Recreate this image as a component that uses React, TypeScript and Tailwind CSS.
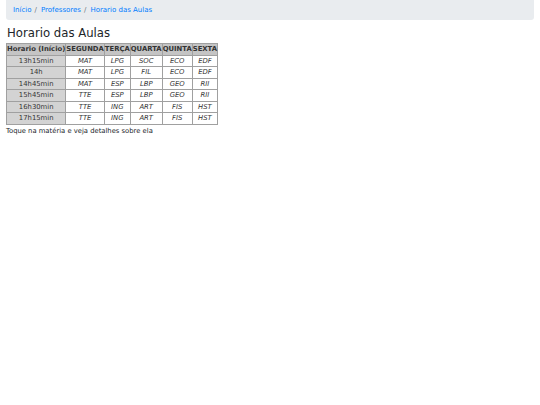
const dias = ["SEGUNDA", "TERÇA", "QUARTA", "QUINTA", "SEXTA"];

const linhas: { hora: string; aulas: string[] }[] = [
  { hora: "13h15min", aulas: ["MAT", "LPG", "SOC", "ECO", "EDF"] },
  { hora: "14h", aulas: ["MAT", "LPG", "FIL", "ECO", "EDF"] },
  { hora: "14h45min", aulas: ["MAT", "ESP", "LBP", "GEO", "RII"] },
  { hora: "15h45min", aulas: ["TTE", "ESP", "LBP", "GEO", "RII"] },
  { hora: "16h30min", aulas: ["TTE", "ING", "ART", "FIS", "HST"] },
  { hora: "17h15min", aulas: ["TTE", "ING", "ART", "FIS", "HST"] },
];

export default function App() {
  return (
    <div className="min-h-[405px] w-[540px] bg-white px-[6px] font-['DejaVu_Sans',sans-serif] text-[#212529]">
      <nav className="flex h-[20px] items-center rounded-b-[3px] bg-[#e9ecef] px-[7px] text-[7px]">
        <a className="text-[#007bff]">Início</a>
        <span className="px-[3px] text-[#6c757d]">/</span>
        <a className="ml-[1px] text-[#007bff]">Professores</a>
        <span className="px-[3px] text-[#6c757d]">/</span>
        <a className="ml-[1px] text-[#007bff]">Horario das Aulas</a>
      </nav>
      <h2 className="mt-[5px] mb-[2px] pl-[1px] text-[11.7px] leading-[16px] font-normal">Horario das Aulas</h2>
      <table className="border-collapse border border-[#a0a0a0] text-[6.85px] leading-[10.5px] whitespace-nowrap text-[#333]">
        <thead>
          <tr className="bg-[#c4c4c4]">
            <th className="border border-[#a0a0a0] px-0 py-0 font-bold">Horario (Início)</th>
            {dias.map((d) => (
              <th key={d} className="border border-[#a0a0a0] px-0 py-0 font-bold">
                {d}
              </th>
            ))}
          </tr>
        </thead>
        <tbody>
          {linhas.map((l) => (
            <tr key={l.hora}>
              <td className="border border-[#a0a0a0] bg-[#d3d3d3] py-0 text-center">{l.hora}</td>
              {l.aulas.map((a, i) => (
                <td key={i} className="border border-[#a0a0a0] py-0 text-center italic">
                  {a}
                </td>
              ))}
            </tr>
          ))}
        </tbody>
      </table>
      <p className="mt-[1px] text-[6.8px] leading-[10px]">Toque na matéria e veja detalhes sobre ela</p>
    </div>
  );
}
